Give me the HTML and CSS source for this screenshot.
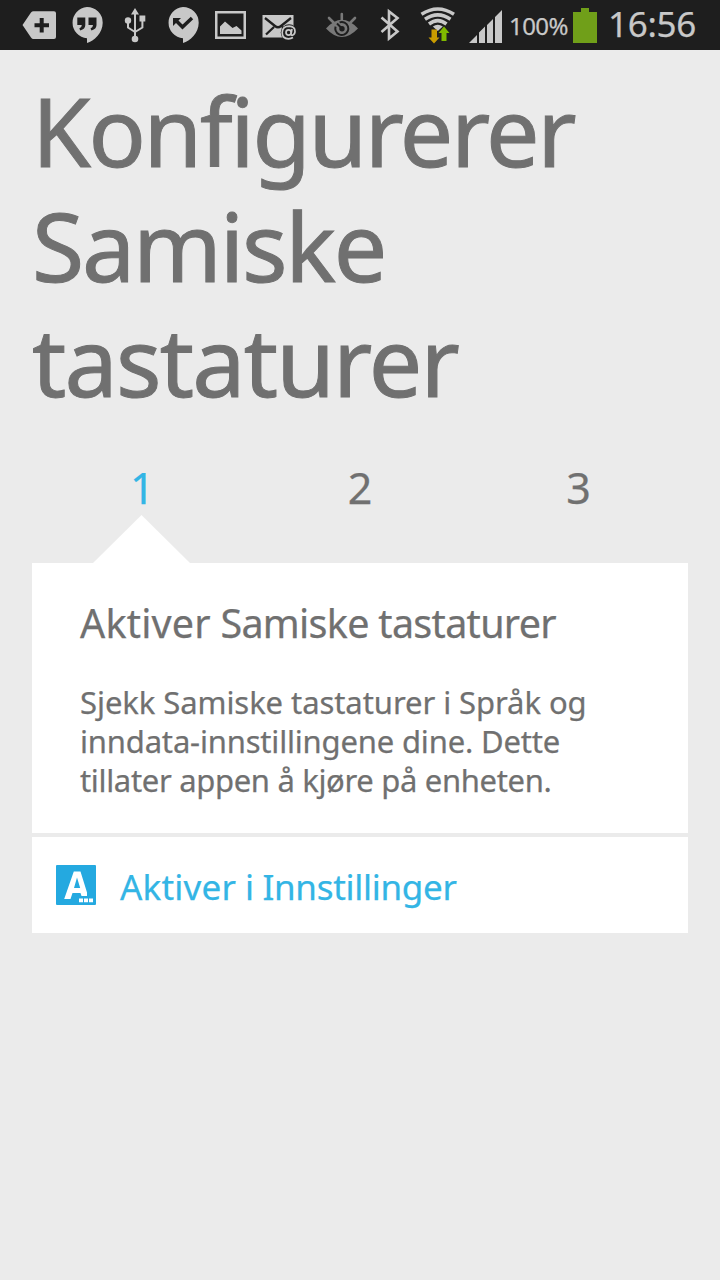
FILE: index.html
```html
<!DOCTYPE html>
<html lang="nb">
<head>
<meta charset="utf-8">
<title>Samiske tastaturer</title>
<link rel="stylesheet" href="styles.css">
</head>
<body>
<header class="status">
  <svg class="status-icons" width="508" height="50" viewBox="0 0 508 50">
    <g fill="#c8c8c8">
      <path d="M22.500 25L31 12.500Q32 11.300 33.500 11.300H54Q56 11.300 56 13.300V37Q56 39 54 39H33.500Q32 39 31 37.500Z"/>
      <path d="M87 7a15.700 15.700 0 0 1 15.700 15.700C102.700 33 94 41 87 43V38.300A15.700 15.700 0 0 1 87 7Z"/>
      <path d="M183 7a15.700 15.700 0 0 1 15.700 15.700C198.700 33 190 41 183 43V38.300A15.700 15.700 0 0 1 183 7Z"/>
      <path d="M135 8l-4 6.500h8ZM139.500 15.500h5.800v6h-5.800Z"/>
      <circle cx="128" cy="20.500" r="3.200"/><circle cx="135" cy="39" r="3.300"/>
      <path fill-rule="evenodd" d="M215 11h31v28h-31ZM217.500 13.500v23h26v-23Z"/>
      <path d="M220 34v-7.500l5-5 7.500 6.500 4-2 5 4.500v3.500Z"/>
      <path d="M262.500 15h31v22.500h-31Z"/>
    </g>
    <g fill="none" stroke="#c8c8c8" stroke-width="2"><path d="M135 12v26M128 22v5.500l7 4.500M142.400 21v6.500l-7.400 4.500"/></g>
    <path d="M34.500 25.300h14.500M41.700 18v14.500" stroke="#1e1e1e" stroke-width="4"/>
    <path d="M77.300 17.500h8v7.500q0 4-5 5.500l-1-2q2.500-1 2.500-3.500h-4.500ZM88.500 17.500h8v7.500q0 4-5 5.500l-1-2q2.500-1 2.500-3.500h-4.500Z" fill="#1e1e1e"/>
    <path d="M176 20.500l6.500 6.500 9.500-9" fill="none" stroke="#1e1e1e" stroke-width="3.500"/><path d="M173 18h8l-8 8Z" fill="#1e1e1e"/>
    <path d="M265 18l10 8q3 2.500 6 0l10-8M266 34.500l8-7.500M282 27l4 3" fill="none" stroke="#1e1e1e" stroke-width="2.300"/>
    <circle cx="289" cy="32.500" r="8.300" fill="#1e1e1e"/>
    <g fill="none" stroke="#c8c8c8" stroke-width="1.700"><circle cx="288.600" cy="32.500" r="2.600"/><path d="M292 29l-1 5q0 1.600 1.500 1.200 2.500-1 2.500-3.700 0-5-5.800-5.300-6.700 0-7 6.300 0 6.200 6.300 6.300 2.500 0 4.500-1.200"/></g>
    <g fill="#797979"><path d="M326 28.500Q341.800 11 358 28.500 341.800 45.500 326 28.500Z"/><path d="M329 18l4.500 4.500M341.800 14v5.500M355 18l-4.500 4.500" stroke="#797979" stroke-width="2.600" stroke-linecap="round"/></g>
    <circle cx="341.800" cy="28.500" r="6.500" fill="none" stroke="#1e1e1e" stroke-width="2" stroke-dasharray="34 7" transform="rotate(-110 341.800 28.500)"/><path d="M337 23.500l5 5" stroke="#1e1e1e" stroke-width="2"/><circle cx="342" cy="28.700" r="2.700" fill="#1e1e1e"/>
    <path d="M381.500 17.500L397.500 31.500 389 38.500V11.500L397.500 18 381.500 32" fill="none" stroke="#c8c8c8" stroke-width="2.600"/>
    <g fill="none" stroke="#c8c8c8" stroke-width="3.500"><path d="M421.500 14.300Q437.800 3.800 454 14.300M425 19.300Q437.800 10.500 450.500 19.300M429 24Q437.800 17.200 446.500 24"/></g>
    <path d="M432.800 26.500q5-3.500 10 0l-5 4.500Z" fill="#c8c8c8"/>
    <path d="M431.500 29.500h5.500v8h2.500l-5.500 6-5.500-6h3Z" fill="#c99c00"/>
    <path d="M441.500 41v-8h-3l5.500-6.500 5.500 6.500h-3v8Z" fill="#80b900"/>
    <path d="M469 43l8-8v8ZM479 43v-10.500l6-6V43ZM487 43V25l6-6v24ZM495 43V17l7-7v33Z" fill="#c8c8c8"/>
  </svg>
  <span class="percent">100%</span>
  <svg class="battery" width="24" height="50"><path d="M0 12h8V8h8v4h8v31H0Z" fill="#709f19"/></svg>
  <span class="clock">16:56</span>
</header>
<main class="setup">
  <h1 class="heading"><span class="heading-first">Konfigurerer</span><br>Samiske<br><span class="heading-last">tastaturer</span></h1>
  <div class="steps"><span class="step active">1</span><span class="step">2</span><span class="step">3</span></div>
  <div class="pointer-row"><svg width="218" height="48"><path d="M61 48L109.500 0 158 48Z" fill="#fff"/></svg></div>
  <section class="card">
    <h2 class="card-title"><span class="wide">Aktiver</span> Samiske tastaturer</h2>
    <p class="card-text"><span class="row-a">Sjekk Samiske tastaturer i Språk og</span><br><span class="row-b">inndata-innstillingene dine. Dette</span><br><span class="row-c">tillater appen å kjøre på enheten.</span></p>
  </section>
  <a class="action">
    <svg width="40" height="40"><rect width="40" height="40" rx="1" fill="#24a9e0"/><path fill-rule="evenodd" d="M17.800 6.500H24.500L31 27.500V31H25.500L24.500 28H16.500L14.500 34H8.200ZM21 12.500L18 23H24.200Z" fill="#fff"/><path d="M21.500 32H39v7H21.500Z" fill="#24a9e0"/><path d="M23 33.500h4v3.800h-4ZM28 33.500h4v3.800h-4ZM33 33.500h4v3.800h-4Z" fill="#fff"/></svg>
    <span class="action-label"><span class="wide">Aktiver</span> i Innstillinger</span>
  </a>
</main>
</body>
</html>
```
FILE: styles.css
```css
* { box-sizing: border-box; }
body { margin: 0; min-height: 1280px; background: #ebebeb; color: #707070; font-family: "Noto Sans", sans-serif; font-weight: 400; -webkit-text-stroke: 0.25px currentColor; }
svg { display: block; flex: none; }
.status { display: flex; height: 50px; background: #1e1e1e; color: #c8c8c8; white-space: nowrap; overflow: hidden; }
.percent { width: 65px; padding-left: 1px; font-size: 24px; line-height: 52px; letter-spacing: -0.6px; }
.clock { padding-left: 11px; font-size: 35px; line-height: 48px; letter-spacing: -0.3px; }
.setup { padding: 23px 32px 0; }
.heading { margin: 0; font-size: 95px; line-height: 115px; font-weight: 400; letter-spacing: -2.2px; white-space: nowrap; -webkit-text-stroke-width: 1px; }
.heading-first { letter-spacing: -2.35px; }
.heading-last { letter-spacing: -1.8px; }
.steps { display: grid; grid-template-columns: repeat(3, 1fr); height: 58px; margin-top: 39px; padding-top: 2px; font-size: 43px; line-height: 58px; text-align: center; }
.active { padding-left: 2px; color: #33b5e5; }
.pointer-row { height: 48px; }
.card { height: 270px; padding: 32px 48px 0; background: #fff; white-space: nowrap; }
.card-title { margin: 0; font-size: 39.5px; line-height: 56px; font-weight: 400; letter-spacing: -0.7px; }
.wide { letter-spacing: 0.2px; }
.card-text { margin: 32px 0 0; font-size: 31px; line-height: 39px; }
.row-a { letter-spacing: -0.07px; }
.row-b { letter-spacing: -0.18px; }
.row-c { letter-spacing: -0.33px; }
.action { display: flex; align-items: center; gap: 24px; height: 96px; margin-top: 4px; padding: 0 24px; background: #fff; color: #33b5e5; font-size: 35px; line-height: 92px; letter-spacing: -0.3px; white-space: nowrap; }
.action-label { padding-top: 3px; }
```
